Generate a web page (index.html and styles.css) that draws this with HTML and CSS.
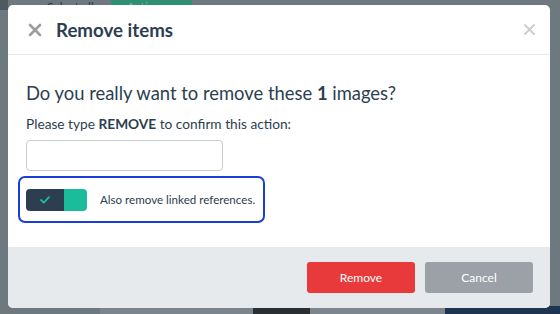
FILE: index.html
```html
<!DOCTYPE html>
<html>
<head>
<meta charset="utf-8">
<link rel="stylesheet" href="styles.css">
</head>
<body>
<div class="page">
  <div class="toolbar">
    <span class="tb-check"></span>
    <span class="tb-select">Select all</span>
    <span class="tb-actions">Actions ▾</span>
  </div>
  <div class="grid">
    <div class="thumb t1"></div>
    <div class="thumb t2"></div>
    <div class="thumb t3"></div>
    <div class="thumb t4"></div>
    <div class="thumb t5"></div>
  </div>
</div>
<div class="overlay">
  <div class="modal">
    <div class="modal-header">
      <svg class="hdr-x" width="14" height="14" viewBox="0 0 14 14"><path d="M2 2L12 12M12 2L2 12" stroke="#9a9ea2" stroke-width="2.6" stroke-linecap="round"/></svg>
      <h1 class="title">Remove items</h1>
      <svg class="close-x" width="11" height="11" viewBox="0 0 11 11"><path d="M1 1L10 10M10 1L1 10" stroke="#c9cdd0" stroke-width="1.8" stroke-linecap="round"/></svg>
    </div>
    <div class="modal-body">
      <h2 class="question">Do you really want to remove these <b>1</b> images?</h2>
      <p class="hint">Please type <b>REMOVE</b> to confirm this action:</p>
      <input class="confirm-input" type="text">
      <div class="option">
        <div class="toggle">
          <span class="toggle-on"><svg width="10" height="8" viewBox="0 0 10 8"><path d="M1 4L3.8 6.6L9 1.2" fill="none" stroke="#1abc9c" stroke-width="1.8" stroke-linecap="round" stroke-linejoin="round"/></svg></span>
          <span class="toggle-knob"></span>
        </div>
        <span class="option-label">Also remove linked references.</span>
      </div>
    </div>
    <div class="modal-footer">
      <button class="btn btn-danger">Remove</button>
      <button class="btn btn-cancel">Cancel</button>
    </div>
  </div>
</div>
</body>
</html>
```
FILE: styles.css
```css
html, body {
  margin: 0;
  padding: 0;
  width: 560px;
  height: 314px;
  overflow: hidden;
  background: #6e787f;
  font-family: Lato, "Open Sans", sans-serif;
}
.page {
  display: flex;
  flex-direction: column;
  justify-content: space-between;
  height: 314px;
}
.toolbar {
  display: flex;
  align-items: flex-start;
  height: 14px;
}
.tb-check {
  width: 8px;
  height: 10px;
  background: #4e5961;
}
.tb-select {
  margin-left: 39px;
  font-size: 12px;
  line-height: 14px;
  color: #2c3840;
}
.tb-actions {
  margin-left: 17px;
  width: 81px;
  height: 14px;
  background: #2f8f72;
  color: #6fb59d;
  font-size: 12px;
  line-height: 14px;
  text-indent: 16px;
}
.grid {
  display: flex;
  height: 8px;
}
.thumb { height: 8px; }
.t1 { width: 100px; background: #6e787f; }
.t2 { width: 153px; background: #7c858b; }
.t3 { width: 57px; background: #2a2f33; }
.t4 { width: 135px; background: #7d868c; }
.t5 { width: 115px; background: #1d3550; }
.overlay {
  position: absolute;
  left: 8px;
  top: 5px;
}
.modal {
  width: 542px;
  height: 303px;
  background: #fff;
  border-radius: 5px;
  overflow: hidden;
  display: flex;
  flex-direction: column;
}
.modal-header {
  height: 49px;
  border-bottom: 1px solid #e9ecef;
  display: flex;
  align-items: center;
  padding: 0 15px 0 20px;
}
.hdr-x { flex: none; }
.title {
  margin: 0 0 0 14px;
  font-size: 18.7px;
  font-weight: 700;
  color: #2c3e50;
  flex: 1;
}
.close-x { flex: none; }
.modal-body {
  flex: 1;
  padding: 0 0 0 10px;
}
.question {
  margin: 26px 0 0 8px;
  font-size: 18.4px;
  font-weight: 400;
  color: #2c3e50;
  line-height: 24px;
}
.question b { font-weight: 700; }
.hint {
  margin: 10px 0 0 8px;
  font-size: 13.7px;
  color: #2c3e50;
  line-height: 18px;
}
.hint b { font-weight: 700; }
.confirm-input {
  display: block;
  margin: 7px 0 0 8px;
  width: 197px;
  height: 31px;
  box-sizing: border-box;
  border: 1px solid #c8cdd1;
  border-radius: 4px;
}
.option {
  margin-top: 5px;
  width: 247px;
  height: 47px;
  box-sizing: border-box;
  border: 2px solid #1a3fd8;
  border-radius: 7px;
  display: flex;
  align-items: center;
  padding-left: 6px;
}
.toggle {
  display: flex;
  width: 61px;
  height: 22px;
  border-radius: 4px;
  overflow: hidden;
}
.toggle-on {
  width: 38px;
  background: #2c3e50;
  display: flex;
  align-items: center;
  justify-content: center;
}
.toggle-knob {
  flex: 1;
  background: #1abc9c;
}
.option-label {
  margin-left: 13px;
  font-size: 11.6px;
  color: #2c3e50;
}
.modal-footer {
  height: 61px;
  background: #e7eaed;
  display: flex;
  align-items: center;
  justify-content: flex-end;
  padding-right: 17px;
  gap: 10px;
}
.btn {
  width: 108px;
  height: 31px;
  border: none;
  border-radius: 3px;
  color: #fff;
  font-family: Lato, sans-serif;
  font-size: 12px;
}
.btn-danger { background: #e83a3a; }
.btn-cancel { background: #9ba1a6; }
```
